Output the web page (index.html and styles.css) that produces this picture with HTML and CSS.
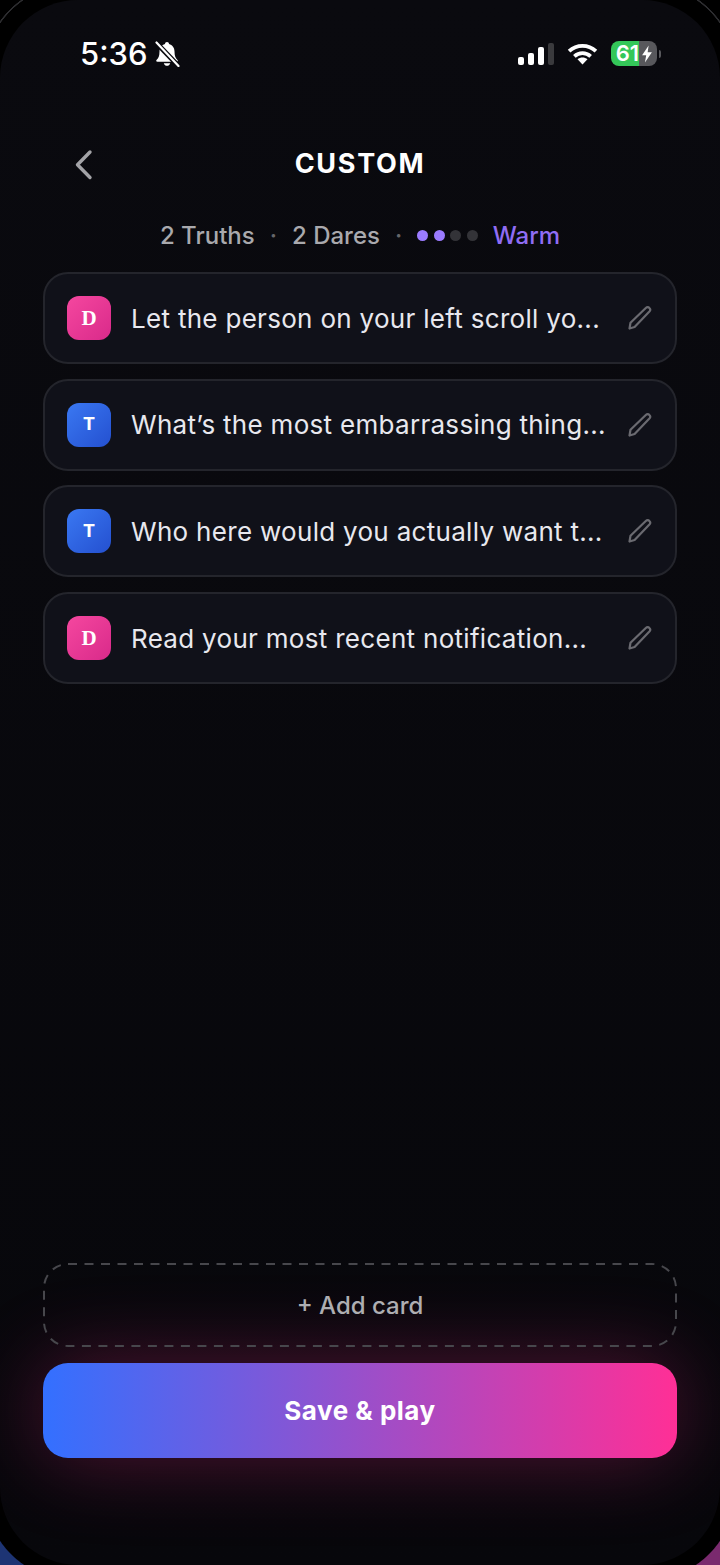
FILE: index.html
```html
<!DOCTYPE html>
<html lang="en">
<head>
    <meta charset="UTF-8">
    <meta name="viewport" content="width=device-width, initial-scale=1.0">
    <title>Custom deck</title>
    <link rel="stylesheet" href="styles.css">
</head>
<body>
    <span class="corner ring-left"></span>
    <span class="corner ring-right"></span>
    <span class="corner glow-left"></span>
    <span class="corner glow-right"></span>

    <div class="screen">
        <div class="status-bar">
            <div class="status-left">
                <span class="time">5:36</span>
                <svg class="bell" viewBox="0 0 26 26" width="26" height="26">
                    <path fill="#fff" d="M13 1c-1.200 0-2 .8-2 1.900C7.700 3.800 5.500 6.500 5.500 10.500c0 4.500-1 6.500-3 8.500-.6.700-.2 1.800.9 1.800h19.200c1.100 0 1.500-1.100.9-1.800-2-2-3-4-3-8.500 0-4-2.200-6.700-5.500-7.600 0-1.100-.8-1.900-2-1.900zM9.800 22.200c.3 1.500 1.600 2.600 3.200 2.600s2.900-1.100 3.200-2.600z"/>
                    <path stroke="#0a0a0f" stroke-width="5" d="M2 1.500 24.500 25"/>
                    <path stroke="#fff" stroke-width="2.200" stroke-linecap="round" d="M2.500 1.500 24.500 25"/>
                </svg>
            </div>
            <div class="status-right">
                <div class="signal">
                    <span class="bar bar-1"></span>
                    <span class="bar bar-2"></span>
                    <span class="bar bar-3"></span>
                    <span class="bar bar-4"></span>
                </div>
                <svg class="wifi" viewBox="0 0 32 24" width="31" height="23">
                    <path fill="none" stroke="#fff" stroke-width="4" d="M2 9.500c8-7.300 20-7.300 28 0"/>
                    <path fill="none" stroke="#fff" stroke-width="4" d="M7.500 15c5-4.500 12-4.500 17 0"/>
                    <path fill="#fff" d="M16 23.500l-5.200-5.400c3-2.500 7.400-2.500 10.400 0z"/>
                </svg>
                <div class="battery">
                    <div class="battery-body">
                        <span class="battery-level">61</span>
                        <svg class="bolt" viewBox="0 0 14 22" width="12" height="18">
                            <path fill="#fff" d="M9 .5 1 12.500h5L4.500 21.500 13 9h-5.200z"/>
                        </svg>
                    </div>
                    <span class="battery-cap"></span>
                </div>
            </div>
        </div>

        <div class="top-bar">
            <svg class="back" viewBox="0 0 20 32" width="20" height="32">
                <path fill="none" stroke="#a3a3a7" stroke-width="3.400" stroke-linecap="round" stroke-linejoin="round" d="M16 3 3.500 15.800 16 28.500"/>
            </svg>
            <h1>CUSTOM</h1>
        </div>

        <div class="summary">
            <span>2 Truths</span>
            <span class="sep">·</span>
            <span>2 Dares</span>
            <span class="sep">·</span>
            <div class="heat">
                <i class="dot on"></i>
                <i class="dot on"></i>
                <i class="dot"></i>
                <i class="dot"></i>
            </div>
            <span class="heat-label">Warm</span>
        </div>

        <div class="card-list">
            <div class="card">
                <span class="badge dare">D</span>
                <span class="card-text">Let the person on your left scroll yo...</span>
                <svg class="pencil" viewBox="0 0 24 24" width="24" height="24"><path d="M1.500 22.500 2.500 16.800 17.800 2c1.200-1.100 2.600-1.100 3.600 0 1 1 1 2.500 0 3.600L6.600 21z"/></svg>
            </div>
            <div class="card">
                <span class="badge truth">T</span>
                <span class="card-text">What’s the most embarrassing thing...</span>
                <svg class="pencil" viewBox="0 0 24 24" width="24" height="24"><path d="M1.500 22.500 2.500 16.800 17.800 2c1.200-1.100 2.600-1.100 3.600 0 1 1 1 2.500 0 3.600L6.600 21z"/></svg>
            </div>
            <div class="card">
                <span class="badge truth">T</span>
                <span class="card-text">Who here would you actually want t...</span>
                <svg class="pencil" viewBox="0 0 24 24" width="24" height="24"><path d="M1.500 22.500 2.500 16.800 17.800 2c1.200-1.100 2.600-1.100 3.600 0 1 1 1 2.500 0 3.600L6.600 21z"/></svg>
            </div>
            <div class="card">
                <span class="badge dare">D</span>
                <span class="card-text">Read your most recent notification...</span>
                <svg class="pencil" viewBox="0 0 24 24" width="24" height="24"><path d="M1.500 22.500 2.500 16.800 17.800 2c1.200-1.100 2.600-1.100 3.600 0 1 1 1 2.500 0 3.600L6.600 21z"/></svg>
            </div>
        </div>

        <div class="actions">
            <button class="add-card">
                <svg class="dashes" width="634" height="84"><rect x="1" y="1" width="632" height="82" rx="24"/></svg>
                + Add card
            </button>
            <button class="save">Save &amp; play</button>
        </div>
    </div>
</body>
</html>
```

FILE: styles.css
```css
* {
    margin: 0;
    padding: 0;
    box-sizing: border-box;
}
html, body {
    width: 720px;
    height: 1565px;
    overflow: hidden;
}
body {
    position: relative;
    background: #000;
    color: #fff;
    font-family: 'Inter', 'Roboto', sans-serif;
}

/* what shows around the rounded screen */
.corner {
    position: absolute;
    width: 40px;
    height: 40px;
}
.ring-left {
    top: 0;
    left: 0;
    background: radial-gradient(circle at 76px 76px, transparent 92px, #2c2c2f 92.500px, #2c2c2f 93.500px, transparent 94px);
}
.ring-right {
    top: 0;
    right: 0;
    background: radial-gradient(circle at -36px 76px, transparent 92px, #2c2c2f 92.500px, #2c2c2f 93.500px, transparent 94px);
}
.glow-left {
    bottom: 0;
    left: 0;
    background: radial-gradient(circle at 76px -36px, transparent 91.500px, #1d3474 92.500px);
}
.glow-right {
    bottom: 0;
    right: 0;
    background: radial-gradient(circle at -36px -36px, transparent 91.500px, #7a2a6e 92.500px);
}

.screen {
    position: relative;
    width: 720px;
    height: 1565px;
    display: flex;
    flex-direction: column;
    padding: 0 43px 107px;
    background: linear-gradient(#0a0a0f, #07070b);
    border-radius: 78px;
}

/* status bar */
.status-bar {
    height: 108px;
    padding: 38px 16px 0 37px;
    display: flex;
    justify-content: space-between;
    align-items: flex-start;
}
.status-left {
    display: flex;
    align-items: center;
    gap: 6px;
}
.time {
    font-size: 31px;
    font-weight: 500;
    line-height: 32px;
}
.status-right {
    display: flex;
    align-items: center;
    gap: 13px;
    padding-top: 3px;
}
.signal {
    display: flex;
    align-items: flex-end;
    gap: 4px;
    height: 22px;
}
.bar {
    width: 6px;
    background: #fff;
    border-radius: 2px;
}
.bar-1 { height: 8px; }
.bar-2 { height: 12px; }
.bar-3 { height: 18px; }
.bar-4 { height: 22px; background: #3a3a3d; }
.battery {
    display: flex;
    align-items: center;
    gap: 2px;
}
.battery-body {
    width: 46px;
    height: 25px;
    border-radius: 8px;
    display: flex;
    align-items: center;
    background: linear-gradient(90deg, #34c759 61%, #58585c 61%);
    overflow: hidden;
}
.battery-level {
    width: 28px;
    text-align: right;
    font-size: 22px;
    font-weight: 600;
    line-height: 25px;
}
.bolt {
    margin-left: 2px;
}
.battery-cap {
    width: 2px;
    height: 8px;
    background: #58585c;
    border-radius: 0 2px 2px 0;
}

/* header */
.top-bar {
    position: relative;
    height: 112px;
    display: flex;
    align-items: center;
    justify-content: center;
}
.back {
    position: absolute;
    left: 31px;
    top: 41px;
}
.top-bar h1 {
    font-size: 27px;
    font-weight: 700;
    letter-spacing: 1.700px;
    line-height: 110px;
}
.summary {
    height: 52px;
    margin-top: -11px;
    display: flex;
    align-items: center;
    justify-content: center;
    gap: 15px;
    font-size: 24px;
    font-weight: 500;
    color: #a9a9ad;
}
.sep {
    color: #66666a;
}
.heat {
    display: flex;
    gap: 5.500px;
}
.dot {
    width: 11px;
    height: 11px;
    border-radius: 50%;
    background: #333338;
}
.dot.on {
    background: #9b7bff;
}
.heat-label {
    color: #8f6df5;
}

/* cards */
.card-list {
    margin-top: 11px;
    display: flex;
    flex-direction: column;
    gap: 14.700px;
}
.card {
    height: 92px;
    display: flex;
    align-items: center;
    padding: 0 23px 0 22px;
    background: #101119;
    border: 2px solid #24252c;
    border-radius: 25px;
}
.badge {
    flex: none;
    width: 44px;
    height: 44px;
    display: flex;
    align-items: center;
    justify-content: center;
    border-radius: 12px;
    font-family: 'Liberation Mono', monospace;
    font-size: 20px;
    font-weight: 700;
}
.badge.dare {
    font-family: 'Liberation Serif', serif;
    font-size: 21px;
    background: linear-gradient(135deg, #f5479f, #d92a8a);
}
.badge.truth {
    background: linear-gradient(135deg, #3a78f2, #2450d0);
}
.card-text {
    flex: 1;
    margin-left: 20px;
    padding-top: 1px;
    font-size: 26px;
    line-height: 32px;
    letter-spacing: 0.300px;
    white-space: nowrap;
    color: #e8e8ee;
}
.pencil {
    flex: none;
    fill: none;
    stroke: #6a6a70;
    stroke-width: 2.200;
    stroke-linejoin: round;
}

/* bottom buttons */
.actions {
    margin-top: auto;
    display: flex;
    flex-direction: column;
    gap: 16px;
}
.actions button {
    display: block;
    width: 100%;
    border-radius: 25px;
    border: none;
    font-family: inherit;
    cursor: pointer;
}
.add-card {
    position: relative;
    z-index: 1;
    height: 84px;
    background: transparent;
    color: #aeaeb2;
    font-size: 24px;
    font-weight: 500;
}
.dashes {
    position: absolute;
    top: 0;
    left: 0;
    fill: none;
    stroke: #47474c;
    stroke-width: 2;
    stroke-dasharray: 9 7.500;
}
.save {
    height: 95px;
    background: linear-gradient(90deg, #3370ff, #ff2f96);
    color: #fff;
    font-size: 26px;
    font-weight: 700;
    letter-spacing: 0.500px;
    box-shadow: 0 0 84px rgba(255, 47, 150, 0.3);
}
```
